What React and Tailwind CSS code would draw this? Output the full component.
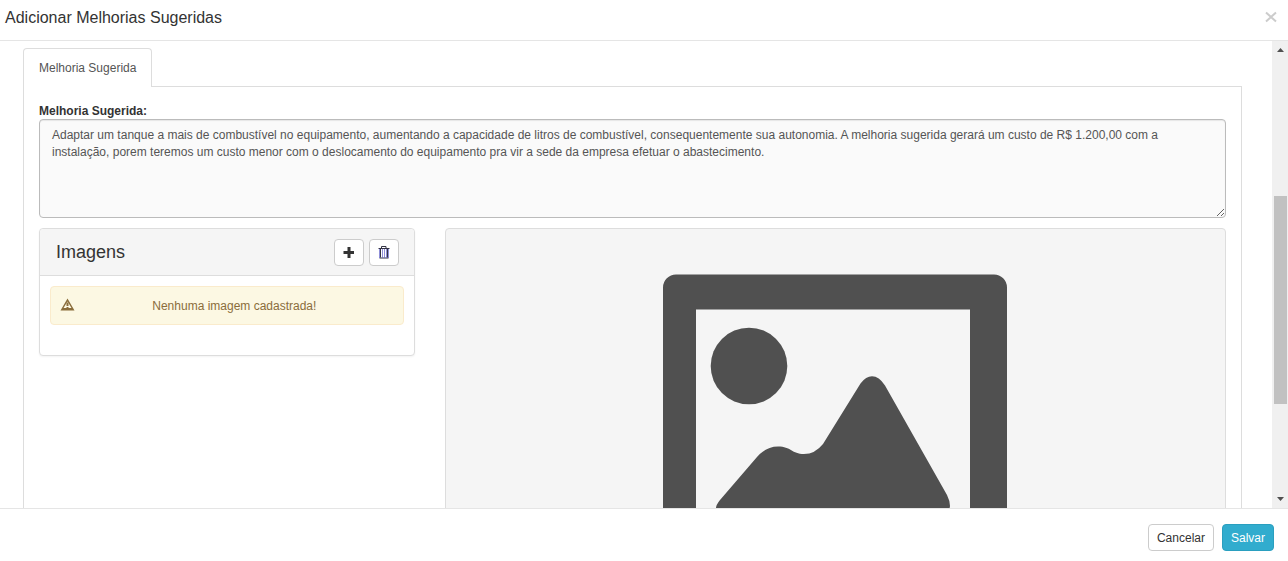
import React, { useState } from "react";

const DEFAULT_TEXT =
  "Adaptar um tanque a mais de combustível no equipamento, aumentando a capacidade de litros de combustível, consequentemente sua autonomia. A melhoria sugerida gerará um custo de R$ 1.200,00 com a instalação, porem teremos um custo menor com o deslocamento do equipamento pra vir a sede da empresa efetuar o abastecimento.";

function CloseIcon() {
  return (
    <svg width="12" height="12" viewBox="0 0 12 12" fill="none" stroke="#cccccc" strokeWidth="2">
      <path d="M1 1.5l10 9M11 1.5l-10 9" />
    </svg>
  );
}

function PlusIcon() {
  return (
    <svg width="12" height="12" viewBox="0 0 12 12" fill="#333333">
      <path d="M4.5 1h3v4H11v3H7.500v4h-3v-4H0.500v-3h4z" />
    </svg>
  );
}

function TrashIcon() {
  return (
    <svg width="12" height="14" viewBox="0 0 12 14" fill="none" stroke="#333344">
      <path d="M0.500 3.500h11M3.500 3V1.500h4.500V3" />
      <path d="M2.500 4v8.500M9.500 4v8.500M1.500 13h9" />
      <path d="M1.500 4v9M10.500 4v9M4.500 4v9M6.500 4v9M8.500 4v9" stroke="#6a6acb" strokeOpacity="0.75" />
    </svg>
  );
}

function WarningIcon() {
  return (
    <svg width="15" height="13" viewBox="0 0 15 13">
      <path
        d="M7.500 0.500L14.500 12.500H0.500zM7.500 3.500L3.500 10h8z"
        fillRule="evenodd"
        fill="#8a6d3b"
      />
      <path d="M6.500 4.500h2v3.500h-2zM6.500 9h2v1.500h-2z" fill="#8a6d3b" />
    </svg>
  );
}

function PictureIcon() {
  return (
    <svg width="344" height="400" viewBox="0 0 344 400" fill="#505050">
      <path
        fillRule="evenodd"
        d="M13 0.500h318a13 13 0 0 1 13 13v373a13 13 0 0 1-13 13H13a13 13 0 0 1-13-13v-373a13 13 0 0 1 13-13zM33 35.500v329h274v-329z"
      />
      <circle cx="86" cy="92" r="38.300" />
      <path d="M53 234Q53 231 57 226L94 183Q103 172.500 115 172.500C128 172.500 129 180 141 180Q152 180 160 170L197.500 109.500Q203 102.300 209 102.300Q216 102.300 222 111.500L284 221Q287 227 287 232Q285 246 270 246H70Q54 246 53 234Z" />
    </svg>
  );
}

function Scrollbar() {
  return (
    <div className="flex w-4 shrink-0 flex-col items-center bg-[#f0f0f0] py-1.5" aria-hidden="true">
      <svg width="7" height="6" viewBox="0 0 7 6" fill="#505050">
        <path d="M0 5h7L3.500 1z" />
      </svg>
      <div className="flex w-full grow flex-col pr-px pl-0.5">
        <div className="grow-[143]" />
        <div className="grow-[208] bg-[#c1c1c1]" />
        <div className="grow-[92]" />
      </div>
      <svg width="7" height="6" viewBox="0 0 7 6" fill="#505050">
        <path d="M0 1h7L3.500 5z" />
      </svg>
    </div>
  );
}

export default function App() {
  const [text, setText] = useState(DEFAULT_TEXT);

  return (
    <div className="flex h-screen flex-col bg-white font-['Liberation_Sans',Arial,sans-serif] text-xs text-[#333333]">
      <header className="flex items-center justify-between border-b border-[#e5e5e5] px-[5px] pt-1.5 pb-2.5">
        <h4 className="text-base leading-6">Adicionar Melhorias Sugeridas</h4>
        <button type="button" aria-label="Fechar" className="px-1.5 pb-0.5">
          <CloseIcon />
        </button>
      </header>

      <div className="flex min-h-0 grow">
        <main className="grow overflow-y-auto pt-[7px] pr-[30px] pl-[23px] [scrollbar-width:none]">
          <div role="tablist" className="flex">
            <button
              type="button"
              role="tab"
              aria-selected="true"
              className="relative -mb-px h-[39px] rounded-t border border-b-0 border-[#dddddd] bg-white px-[15px] text-[#555555]"
            >
              Melhoria Sugerida
            </button>
          </div>

          <div role="tabpanel" className="border border-[#dddddd] px-[15px] pt-4 pb-4">
            <label htmlFor="melhoria" className="block leading-4 font-bold">
              Melhoria Sugerida:
            </label>
            <textarea
              id="melhoria"
              value={text}
              onChange={(e) => setText(e.target.value)}
              className="block h-[99px] w-full rounded border border-[#bbbbbb] bg-[#fafafa] px-3 py-[7px] leading-[17px] text-[#555555] shadow-[inset_0_1px_1px_rgba(0,0,0,0.08)]"
            />

            <div className="mt-2.5 grid grid-cols-3 items-start gap-[30px]">
              <section className="rounded border border-[#dddddd] bg-white shadow-xs">
                <div className="flex h-[47px] items-center justify-between rounded-t border-b border-[#dddddd] bg-[#f5f5f5] pr-[15px] pl-4">
                  <h3 className="text-lg">Imagens</h3>
                  <div className="flex gap-[5px]">
                    <button
                      type="button"
                      aria-label="Adicionar imagem"
                      className="flex h-[27px] w-[30px] items-center justify-center rounded border border-[#cccccc] bg-white"
                    >
                      <PlusIcon />
                    </button>
                    <button
                      type="button"
                      aria-label="Remover imagem"
                      className="flex h-[27px] w-[30px] items-center justify-center rounded border border-[#cccccc] bg-white"
                    >
                      <TrashIcon />
                    </button>
                  </div>
                </div>
                <div className="px-2.5 pt-2.5 pb-[30px]">
                  <div className="flex h-[39px] items-center rounded border border-[#faebcc] bg-[#fcf8e3] px-[9px] pb-0.5 text-[#8a6d3b]">
                    <WarningIcon />
                    <span className="grow pt-0.5 text-center">Nenhuma imagem cadastrada!</span>
                  </div>
                </div>
              </section>

              <div className="col-span-2 flex justify-center rounded border border-[#dddddd] bg-[#f5f5f5] py-[45px]">
                <PictureIcon />
              </div>
            </div>
          </div>
        </main>
        <Scrollbar />
      </div>

      <footer className="flex justify-end gap-2 border-t border-[#e5e5e5] px-3.5 pt-[15px] pb-2.5">
        <button type="button" className="h-[27px] rounded border border-[#cccccc] bg-white px-2">
          Cancelar
        </button>
        <button type="button" className="h-[27px] rounded border border-[#2a9fbf] bg-[#31acce] px-2 text-white">
          Salvar
        </button>
      </footer>
    </div>
  );
}
